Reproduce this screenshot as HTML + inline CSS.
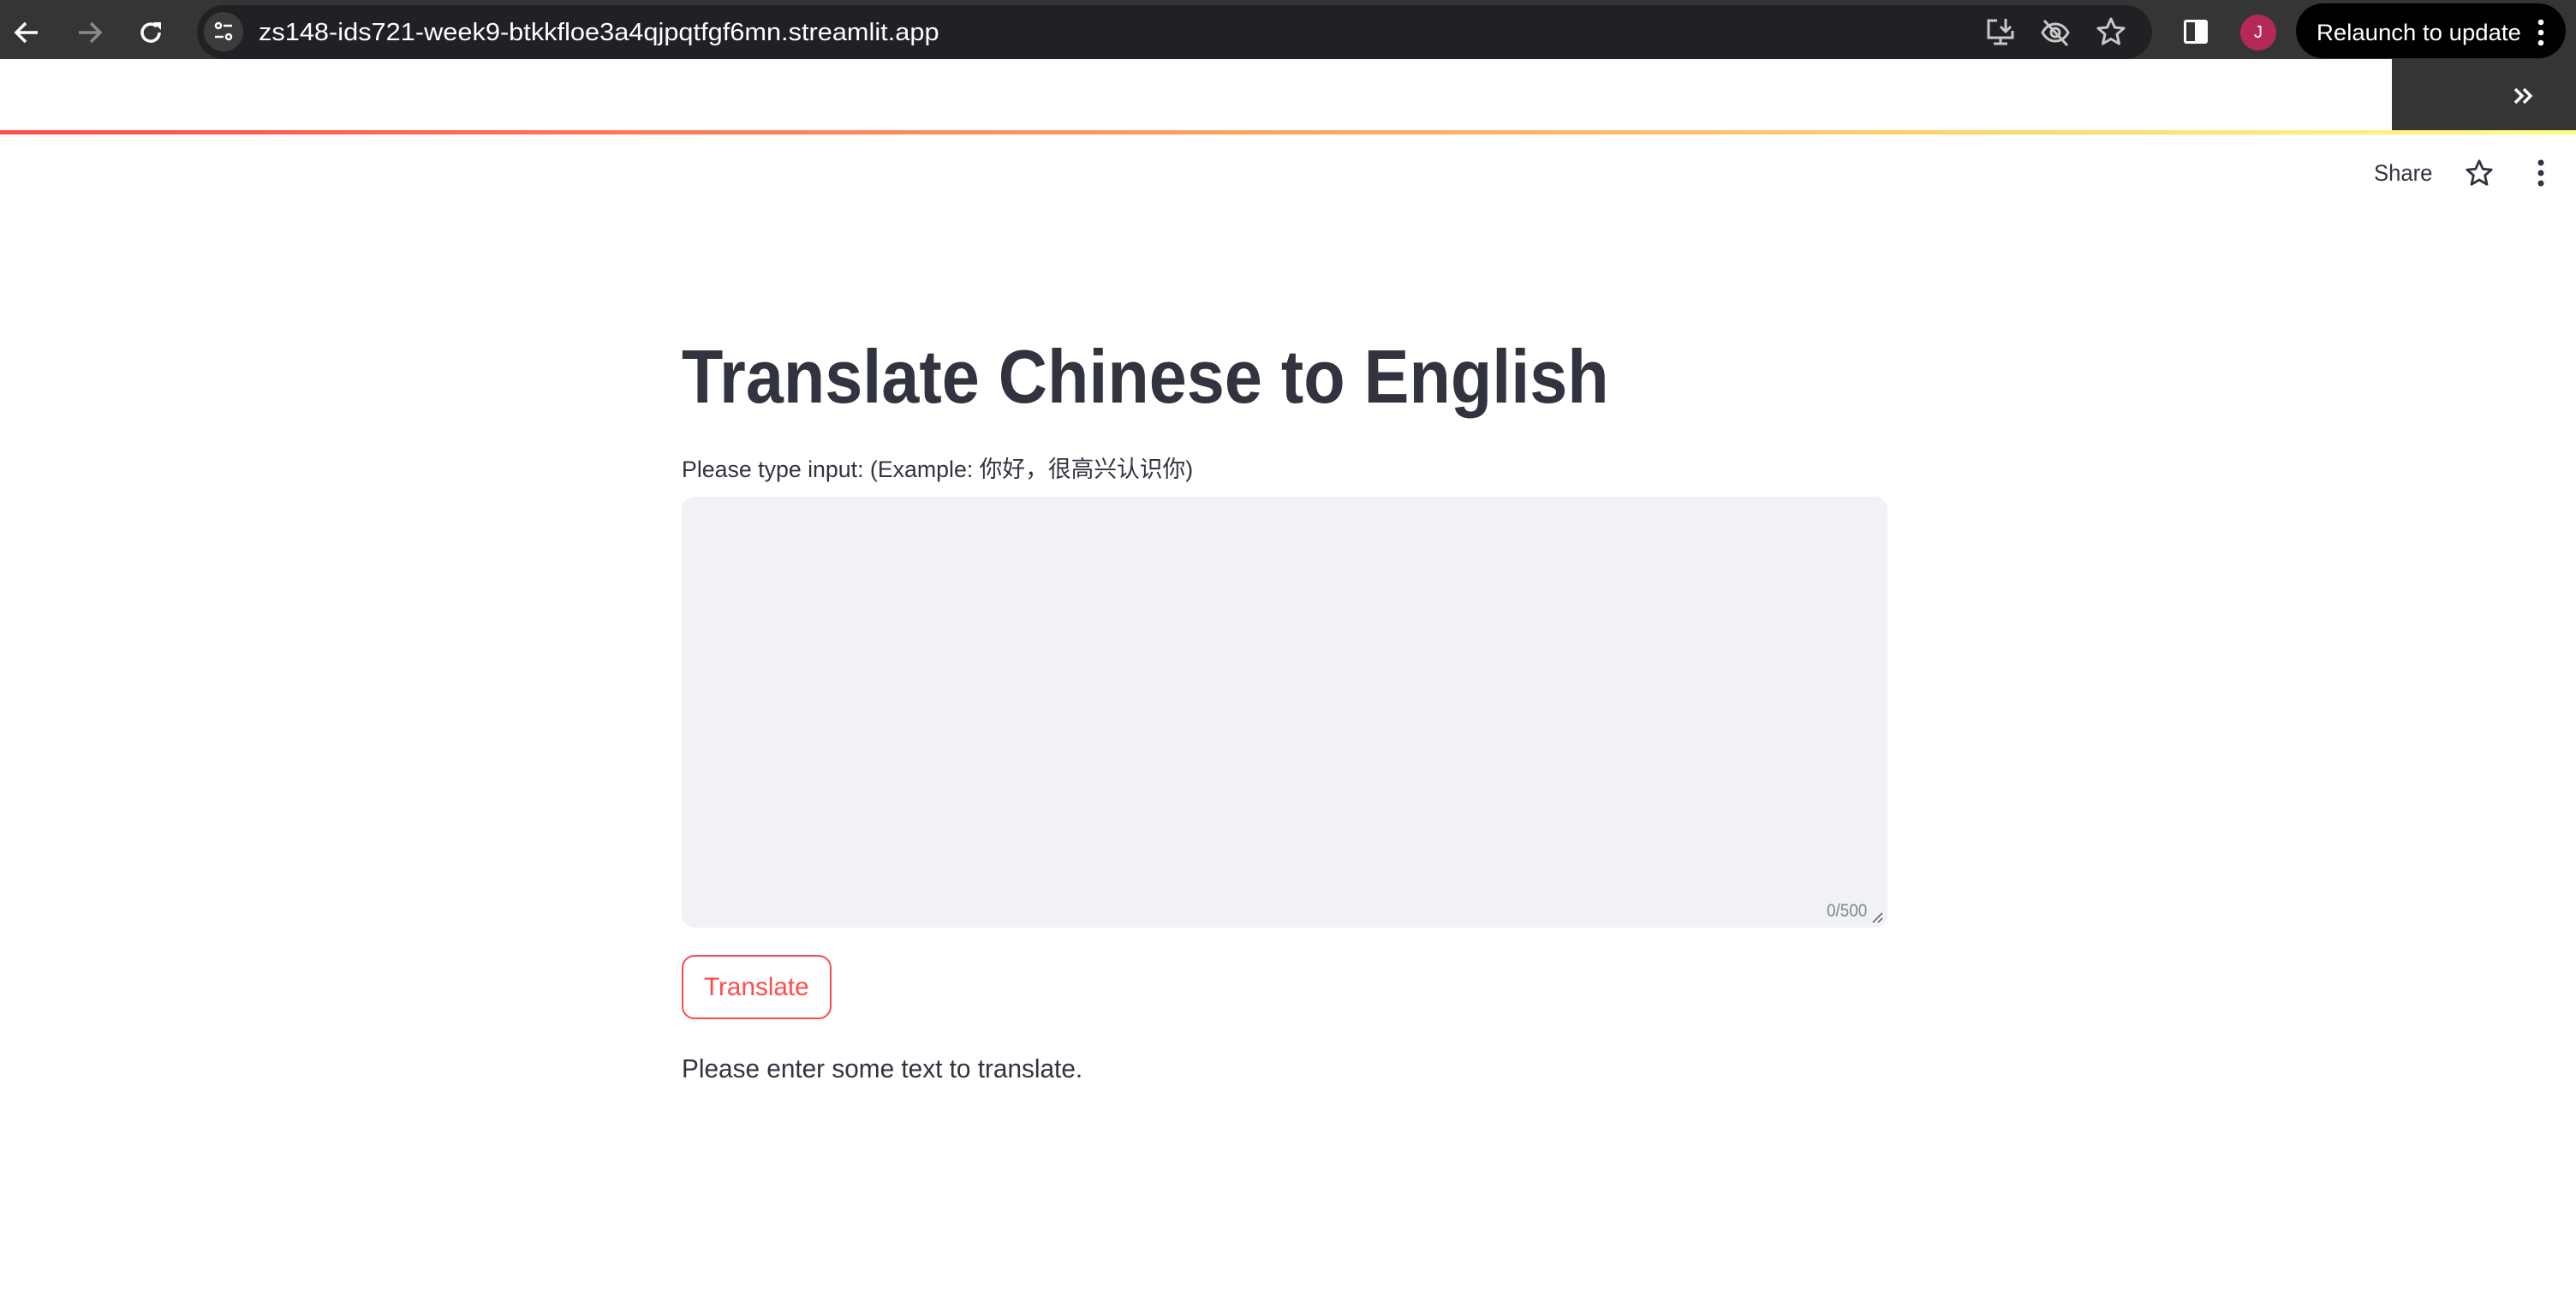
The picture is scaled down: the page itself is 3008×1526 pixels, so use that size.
<!DOCTYPE html>
<html><head><meta charset="utf-8"><style>
*{margin:0;padding:0;box-sizing:border-box}
body{width:3008px;height:1526px;background:#fff;position:relative;overflow:hidden;font-family:"Liberation Sans","Noto Sans CJK SC",sans-serif;color:#31333f}
.abs{position:absolute}
.sx{display:inline-block;transform-origin:0 50%;white-space:nowrap}
</style></head><body>
<div class="abs" style="left:0;top:0;width:3008px;height:69px;background:#353535"></div>
<div class="abs" style="left:230px;top:6px;width:2283px;height:63px;background:#202124;border-radius:32px"></div>
<svg class="abs" style="left:14px;top:22px" width="36" height="32" viewBox="0 0 36 32"><path d="M30 16H6M16 5L5 16l11 11" stroke="#fff" stroke-width="3.5" fill="none"/></svg>
<svg class="abs" style="left:86px;top:22px" width="36" height="32" viewBox="0 0 36 32"><path d="M6 16h24M20 5l11 11-11 11" stroke="#8a8a8a" stroke-width="3.5" fill="none"/></svg>
<svg class="abs" style="left:158px;top:20px" width="36" height="36" viewBox="0 0 36 36"><path d="M28 18a10 10 0 1 1-3-7" stroke="#fff" stroke-width="3.5" fill="none"/><path d="M21 6h9v9z" fill="#fff"/></svg>
<div class="abs" style="left:238px;top:14px;width:46px;height:46px;border-radius:50%;background:#3c3c3c"></div>
<svg class="abs" style="left:248px;top:24px" width="26" height="26" viewBox="0 0 26 26"><circle cx="7" cy="6" r="3" stroke="#fff" stroke-width="2.5" fill="none"/><path d="M13 6h10M3 19h10" stroke="#fff" stroke-width="2.5"/><circle cx="19" cy="19" r="3" stroke="#fff" stroke-width="2.5" fill="none"/></svg>
<div class="abs" style="left:302px;top:20px;font-size:29px;color:#fff;line-height:36px"><span class="sx" style="transform:scaleX(1.06)">zs148-ids721-week9-btkkfloe3a4qjpqtfgf6mn.streamlit.app</span></div>
<svg class="abs" style="left:2318px;top:20px" width="36" height="36" viewBox="0 0 36 36"><path d="M14 4H4v20h28v-8M10 31h16M18 24v7" stroke="#c8c8c8" stroke-width="3" fill="none"/><path d="M24 2v14M18 11l6 6 6-6" stroke="#c8c8c8" stroke-width="3" fill="none"/></svg>
<svg class="abs" style="left:2382px;top:20px" width="36" height="36" viewBox="0 0 36 36"><path d="M3 18c4-7 9-10 15-10s11 3 15 10c-4 7-9 10-15 10S7 25 3 18z" stroke="#c8c8c8" stroke-width="3" fill="none"/><circle cx="18" cy="18" r="5" stroke="#c8c8c8" stroke-width="3" fill="none"/><path d="M5 4l27 29" stroke="#c8c8c8" stroke-width="3"/></svg>
<svg class="abs" style="left:2447px;top:19px" width="36" height="36" viewBox="0 0 36 36"><path d="M18 3l4.5 10 10.5 1-8 7 2.5 11L18 26.5 8.5 32 11 21l-8-7 10.5-1z" stroke="#c8c8c8" stroke-width="3" fill="none" stroke-linejoin="round"/></svg>
<div class="abs" style="left:2550px;top:23px;width:28px;height:28px;border:3px solid #fff;border-radius:3px"><div style="position:absolute;right:0;top:0;width:12px;height:22px;background:#fff"></div></div>
<div class="abs" style="left:2616px;top:17px;width:42px;height:42px;border-radius:50%;background:#b5295a;color:#fff;font-size:20px;text-align:center;line-height:42px">J</div>
<div class="abs" style="left:2681px;top:4px;width:315px;height:64px;border-radius:32px;background:#000"></div>
<div class="abs" style="left:2705px;top:21px;font-size:27px;color:#fff;line-height:34px"><span class="sx" style="transform:scaleX(1.02)">Relaunch to update</span></div>
<svg class="abs" style="left:2960px;top:20px" width="14" height="36" viewBox="0 0 14 36"><circle cx="7" cy="6" r="3.3" fill="#fff"/><circle cx="7" cy="18" r="3.3" fill="#fff"/><circle cx="7" cy="30" r="3.3" fill="#fff"/></svg>
<div class="abs" style="left:2793px;top:69px;width:215px;height:84px;background:#353535"></div>
<svg class="abs" style="left:2934px;top:101px" width="26" height="22" viewBox="0 0 26 22"><path d="M3 3l8 8-8 8M13 3l8 8-8 8" stroke="#fff" stroke-width="3.5" fill="none"/></svg>
<div class="abs" style="left:0;top:152px;width:3008px;height:5px;background:linear-gradient(90deg,#ff4b4b,#fffd80)"></div>
<div class="abs" style="left:2772px;top:185px;font-size:27px;color:#31333f;line-height:34px"><span class="sx" style="transform:scaleX(0.95)">Share</span></div>
<svg class="abs" style="left:2878px;top:185px" width="34" height="34" viewBox="0 0 36 36"><path d="M18 3l4.5 10 10.5 1-8 7 2.5 11L18 26.5 8.5 32 11 21l-8-7 10.5-1z" stroke="#31333f" stroke-width="3" fill="none" stroke-linejoin="round"/></svg>
<svg class="abs" style="left:2960px;top:185px" width="14" height="34" viewBox="0 0 14 34"><circle cx="7" cy="5" r="3.5" fill="#31333f"/><circle cx="7" cy="17" r="3.5" fill="#31333f"/><circle cx="7" cy="29" r="3.5" fill="#31333f"/></svg>
<div class="abs" style="left:796px;top:390px;font-size:88px;font-weight:bold;line-height:100px;color:#31333f"><span class="sx" style="transform:scaleX(0.9)">Translate Chinese to English</span></div>
<div class="abs" style="left:796px;top:531px;font-size:27px;line-height:34px"><span class="sx" style="transform:scaleX(0.99)">Please type input: (Example: 你好，很高兴认识你)</span></div>
<div class="abs" style="left:796px;top:580px;width:1408px;height:503px;background:#f0f2f6;border-radius:15px"></div>
<div class="abs" style="left:2133px;top:1051px;font-size:21px;color:#808495;line-height:26px"><span class="sx" style="transform:scaleX(0.9)">0/500</span></div>
<svg class="abs" style="left:2184px;top:1063px" width="16" height="16" viewBox="0 0 16 16"><path d="M14 3L3 14M14 9l-5 5" stroke="#555" stroke-width="1.5"/></svg>
<div class="abs" style="left:796px;top:1115px;width:175px;height:75px;border:2px solid #ff4b4b;border-radius:15px"></div>
<div class="abs" style="left:822px;top:1135px;font-size:30px;color:#ff4b4b;line-height:36px"><span class="sx" style="transform:scaleX(0.99)">Translate</span></div>
<div class="abs" style="left:796px;top:1229px;font-size:31px;line-height:38px"><span class="sx" style="transform:scaleX(0.96)">Please enter some text to translate.</span></div>
</body></html>
